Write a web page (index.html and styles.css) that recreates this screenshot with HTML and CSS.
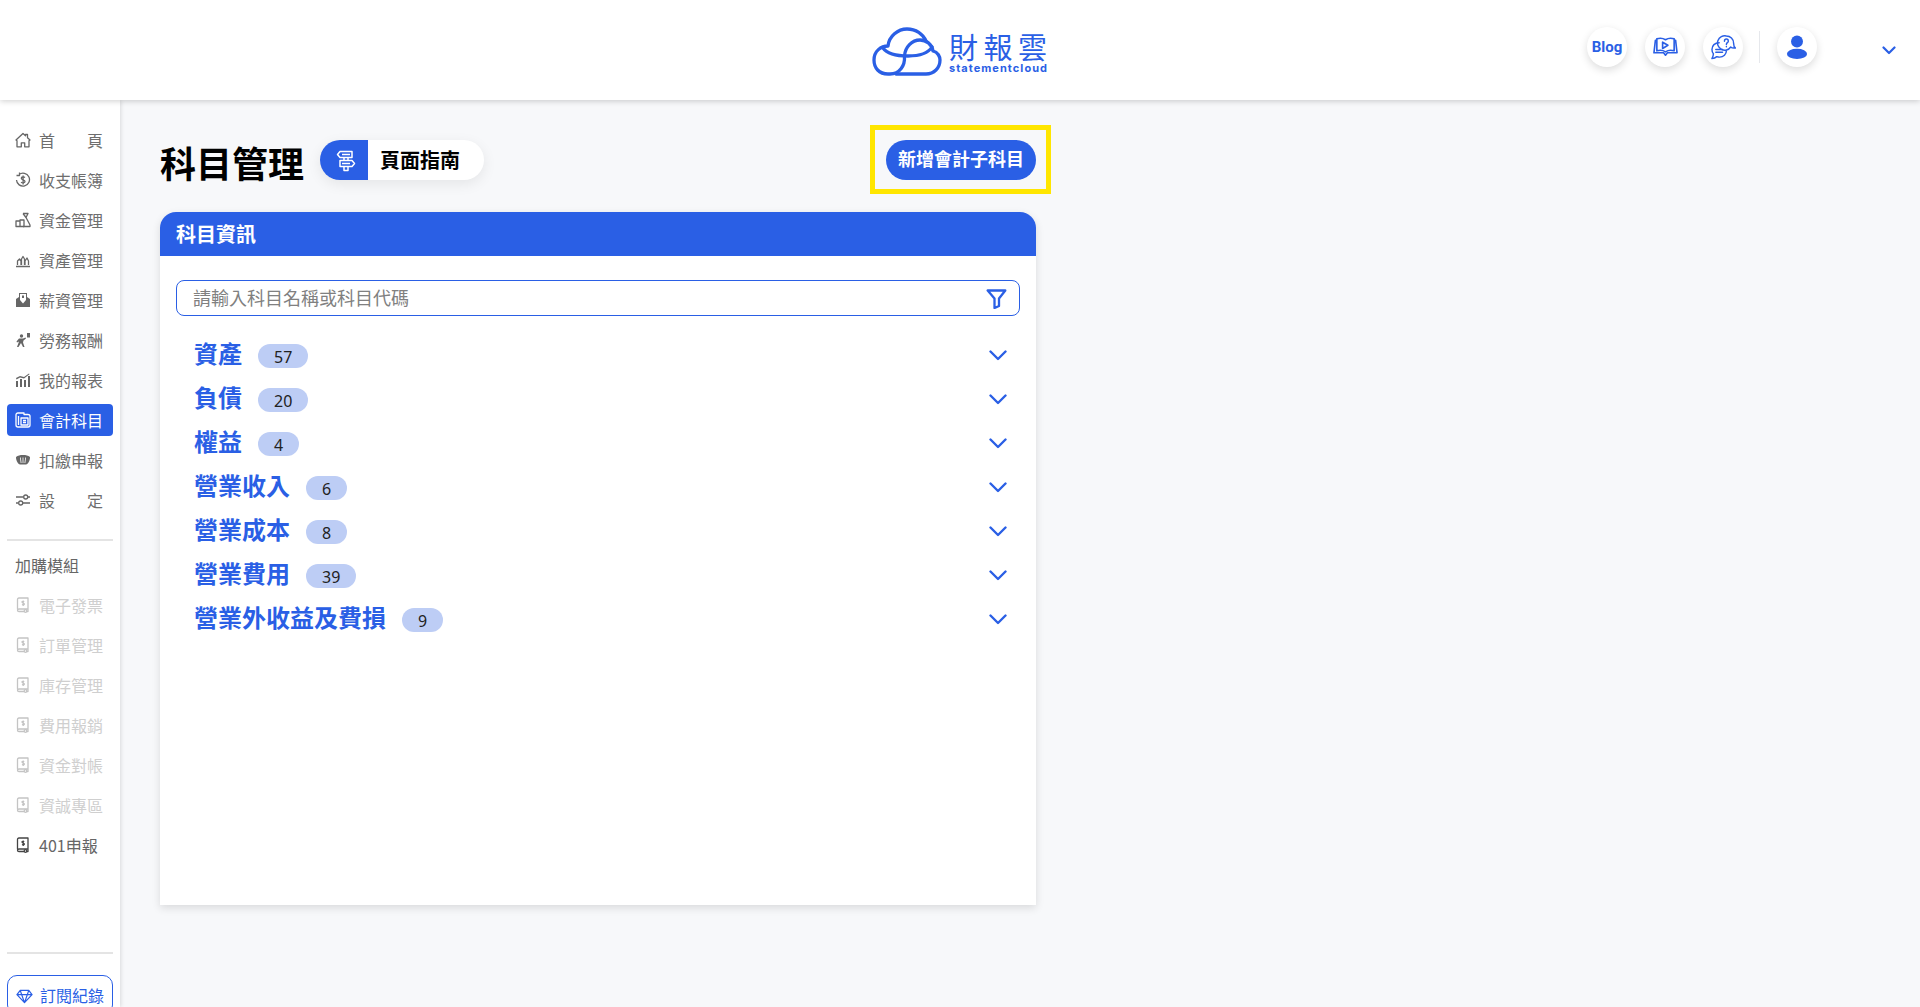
FILE: index.html
```html
<!DOCTYPE html>
<html lang="zh-Hant">
<head>
<meta charset="utf-8">
<title>財報雲 科目管理</title>
<link rel="stylesheet" href="styles.css">
</head>
<body>
<header class="topbar">
  <a class="logo">
    <svg class="logo-mark" viewBox="0 0 70 49" fill="none" stroke="#2a5fe5" stroke-width="3.300" stroke-linecap="round" stroke-linejoin="round">
      <path d="M32.500 30C33 38 28 47 18 47h-2C7 47 2 41 2 33c0-9 7-14 14-14C17 9 26 2 35 2c9 0 16 5 19 12"/>
      <path d="M32.500 29C33 20 40 13 48 13c6 0 12 4 13 11 5 1 7 6 7 9 0 8-6 14-14 14H24"/>
      <path d="M11 21c5 7 19 8 25 8s19-1 24-9"/>
    </svg>
    <span class="logo-text">
      <span class="logo-zh">財報雲</span>
      <span class="logo-en">statementcloud</span>
    </span>
  </a>
  <nav class="top-actions">
    <a class="round-btn blog">Blog</a>
    <a class="round-btn">
      <svg class="i-book" viewBox="0 0 26 20" fill="none" stroke="#2a5fe5" stroke-width="1.700" stroke-linejoin="round"><path d="M4 3H2.500L1 16h10l2 2.500 2-2.500h10L23.500 3H22"/><path d="M4 1.500c3-1 6-1 9 1 3-2 6-2 9-1V14c-3-1-6-1-9 1-3-2-6-2-9-1z"/><path d="M10 5v6.500l5.500-3.300z"/></svg>
    </a>
    <a class="round-btn">
      <svg class="i-help" viewBox="0 0 26 26" fill="none" stroke="#2a5fe5" stroke-width="1.500" stroke-linejoin="round" stroke-linecap="round"><path d="M16 1a7.500 7.500 0 0 1 7.500 7.500c0 2 .5 4 2 5-2.500.3-4 0-5-1A7.500 7.500 0 1 1 16 1z"/><path d="M14 6.500c0-3 4-3 4 0 0 1.500-2 1.500-2 3.300M16 12v.3"/><path d="M8.500 8C4 8 1 11 1 15c0 2 .7 3.500 1.500 4.500 0 2-.7 3.500-1.500 5 2 0 3.500-.5 5-2a8 8 0 0 0 3 .5c4 0 7-3 7-6.500"/><path d="M5 15h7M5 18h7"/></svg>
    </a>
    <span class="top-divider"></span>
    <a class="round-btn">
      <svg class="i-user" viewBox="0 0 24 26" fill="#2a5fe5"><circle cx="12" cy="7" r="6.500"/><ellipse cx="12" cy="20.500" rx="11" ry="5.500"/></svg>
    </a>
    <svg class="top-chevron" viewBox="0 0 14 9" fill="none" stroke="#2a5fe5" stroke-width="2.200" stroke-linecap="round" stroke-linejoin="round"><path d="M1.500 1.500 7 7l5.500-5.500"/></svg>
  </nav>
</header>

<div class="shell">
  <aside class="sidebar">
    <ul class="menu">
      <li class="menu-item">
        <svg class="mi" viewBox="0 0 16 16"><path d="M1 8 8 1.500l2.500 2.300V2.500h2v3.200L15 8l-1 .8v6H9.700v-4H6.300v4H2v-6z"/></svg>
        <span class="label spread"><span>首</span><span>頁</span></span>
      </li>
      <li class="menu-item">
        <svg class="mi" viewBox="0 0 16 16"><path d="M4 2.500A6.500 6.500 0 1 1 1.500 8M1.500 3.500h3v-3"/><path d="M10 5.500C9 4.700 6.300 4.700 6.300 6.300c0 2 3.700 1.200 3.700 3.300 0 1.600-2.700 1.600-4 .7M8.100 3.500v9"/></svg>
        <span class="label">收支帳簿</span>
      </li>
      <li class="menu-item">
        <svg class="mi" viewBox="0 0 16 16"><path d="M8 1.500h5L11 5.500l4 7.500v1.500H8"/><path d="M8 1.500l3 4M1 9h4v5.500H1zM5 8h4v6.500H5z"/></svg>
        <span class="label">資金管理</span>
      </li>
      <li class="menu-item">
        <svg class="mi" viewBox="0 0 16 16"><path d="M1 14.500h14M2.500 13V9l2-2 1.500 2v4M6.500 13V7l1.500-2.500L9.500 7v6M10 13V9l2-3 1.500 3v4"/></svg>
        <span class="label">資產管理</span>
      </li>
      <li class="menu-item">
        <svg class="mi solid" viewBox="0 0 16 16"><path d="M1 7l3-2V1h8V5l3 2v8H1z"/><path class="cut" d="M5 2h6V8L8 11.500 5 8z"/><path d="M7 3.500h2V6H7z"/></svg>
        <span class="label">薪資管理</span>
      </li>
      <li class="menu-item">
        <svg class="mi solid" viewBox="0 0 16 16"><circle cx="6.500" cy="4" r="1.700"/><path d="M4 6.500h4l2.500-1 .5 1L8.500 8.500 8 10.500 9.500 15H8L6 11l-2.500 4H2l2-5.500-2 1-.5-1z"/><path d="M12 1h3v4.500h-3z"/></svg>
        <span class="label">勞務報酬</span>
      </li>
      <li class="menu-item">
        <svg class="mi solid" viewBox="0 0 16 16"><path d="M1 9h2v6H1zM5 7h2v8H5zM9 8h2v7H9zM13 4h2v11h-2z"/><path d="M1 6l4-2 4 1 5-3.500.5.800L9 6.500l-4-1-3.500 2z"/></svg>
        <span class="label">我的報表</span>
      </li>
      <li class="menu-item active">
        <svg class="mi" viewBox="0 0 16 16"><path d="M9 2.500V1H3C1.500 1 1 2 1 3v10c0 1 .5 2 2 2h10c1 0 2-.5 2-2V4c0-1-1-1.500-2-1.500z"/><path d="M6 6h7v7H6zM8 8.500h3M8 10.500h3M3.500 4v9"/></svg>
        <span class="label">會計科目</span>
      </li>
      <li class="menu-item">
        <svg class="mi solid" viewBox="0 0 16 16"><path d="M1 5c2-1.500 4-2 7-2s5 .5 7 2c0 4-2 7-4 7.500H5C3 12 1 9 1 5z"/><path class="cut" d="M5 5.500h.8l.7 5.500h-.8zM7.600 5.500h.8V11h-.8zM10.200 5.500h.8L10.300 11h-.8z"/></svg>
        <span class="label">扣繳申報</span>
      </li>
      <li class="menu-item">
        <svg class="mi" viewBox="0 0 16 16"><path d="M1 5h7.500M13 5h2M1 11h2.500M8 11h7"/><circle cx="10.700" cy="5" r="2"/><circle cx="5.700" cy="11" r="2"/></svg>
        <span class="label spread"><span>設</span><span>定</span></span>
      </li>
    </ul>
    <hr class="side-rule">
    <div class="side-title">加購模組</div>
    <ul class="menu">
      <li class="menu-item off"><svg class="mi" viewBox="0 0 16 16"><use href="#book"/></svg><span class="label">電子發票</span></li>
      <li class="menu-item off"><svg class="mi" viewBox="0 0 16 16"><use href="#book"/></svg><span class="label">訂單管理</span></li>
      <li class="menu-item off"><svg class="mi" viewBox="0 0 16 16"><use href="#book"/></svg><span class="label">庫存管理</span></li>
      <li class="menu-item off"><svg class="mi" viewBox="0 0 16 16"><use href="#book"/></svg><span class="label">費用報銷</span></li>
      <li class="menu-item off"><svg class="mi" viewBox="0 0 16 16"><use href="#book"/></svg><span class="label">資金對帳</span></li>
      <li class="menu-item off"><svg class="mi" viewBox="0 0 16 16"><use href="#book"/></svg><span class="label">資誠專區</span></li>
      <li class="menu-item dark"><svg class="mi" viewBox="0 0 16 16"><use href="#book"/></svg><span class="label">401申報</span></li>
    </ul>
    <hr class="side-rule lower">
    <a class="sub-btn">
      <svg class="gem" viewBox="0 0 18 15" fill="none" stroke="#2a5fe5" stroke-width="1.300" stroke-linejoin="round"><path d="M4.500 1h9L17 5.500 9 14 1 5.500zM1 5.500h16M6 5.500 9 14l3-8.500M6 5.500 4.500 1M12 5.500 13.500 1"/></svg>
      <span>訂閱紀錄</span>
    </a>
  </aside>

  <main class="content">
    <div class="page-head">
      <div class="title-group">
        <h1>科目管理</h1>
        <a class="guide">
          <span class="guide-icon">
            <svg viewBox="0 0 20 22" fill="none" stroke="#fff" stroke-width="1.500" stroke-linejoin="round"><path d="M4 2h12v6H4L1.500 5zM16 11H4v6h12l2.500-3zM8 8v3M12 8v3M8 17v4h4v-4"/><path d="M6 5h8M6 14h8"/></svg>
          </span>
          <span class="guide-text">頁面指南</span>
        </a>
      </div>
      <button class="primary-btn">新增會計子科目</button>
    </div>

    <section class="card">
      <h2 class="card-head">科目資訊</h2>
      <div class="card-body">
        <div class="search">
          <span class="placeholder">請輸入科目名稱或科目代碼</span>
          <svg class="filter" viewBox="0 0 20 20" fill="none" stroke="#2a5fe5" stroke-width="2.300" stroke-linejoin="round"><path d="M1.200 1.500h17.600L12.500 9.500V17L8 19V9.500z"/></svg>
        </div>
        <ul class="groups">
          <li class="group"><span class="g-name">資產</span><span class="badge">57</span><svg class="g-chev" viewBox="0 0 18 11"><path d="M1.500 1.500 9 9l7.500-7.500"/></svg></li>
          <li class="group"><span class="g-name">負債</span><span class="badge">20</span><svg class="g-chev" viewBox="0 0 18 11"><path d="M1.500 1.500 9 9l7.500-7.500"/></svg></li>
          <li class="group"><span class="g-name">權益</span><span class="badge">4</span><svg class="g-chev" viewBox="0 0 18 11"><path d="M1.500 1.500 9 9l7.500-7.500"/></svg></li>
          <li class="group"><span class="g-name">營業收入</span><span class="badge">6</span><svg class="g-chev" viewBox="0 0 18 11"><path d="M1.500 1.500 9 9l7.500-7.500"/></svg></li>
          <li class="group"><span class="g-name">營業成本</span><span class="badge">8</span><svg class="g-chev" viewBox="0 0 18 11"><path d="M1.500 1.500 9 9l7.500-7.500"/></svg></li>
          <li class="group"><span class="g-name">營業費用</span><span class="badge">39</span><svg class="g-chev" viewBox="0 0 18 11"><path d="M1.500 1.500 9 9l7.500-7.500"/></svg></li>
          <li class="group"><span class="g-name">營業外收益及費損</span><span class="badge">9</span><svg class="g-chev" viewBox="0 0 18 11"><path d="M1.500 1.500 9 9l7.500-7.500"/></svg></li>
        </ul>
      </div>
    </section>
  </main>
</div>

<svg class="defs" width="0" height="0" aria-hidden="true">
  <symbol id="book" viewBox="0 0 16 16">
    <path d="M2.500 12V2.500c0-.8.500-1.500 1.500-1.500h9v11H4c-1 0-1.500.5-1.500 1.200 0 .8.500 1.300 1.500 1.300h5M13 12v2.500h-1"/>
    <path d="M9.300 4.500C8.600 4 7 4 7 5c0 1.300 2.400.7 2.400 2C9.400 8 7.800 8 7 7.500M8.200 3.500v5.500"/>
    <circle cx="10.500" cy="14" r="1.300"/>
  </symbol>
</svg>
</body>
</html>
```

FILE: styles.css
```css
* { box-sizing: border-box; }
html, body { margin: 0; height: 100%; }
body {
  height: 1007px;
  overflow: hidden;
  background: #f7f8fa;
  color: #000;
  font-family: "Noto Sans CJK TC", "Noto Sans", sans-serif;
}
ul { list-style: none; margin: 0; padding: 0; }
h1, h2 { margin: 0; }
.defs { position: absolute; }

/* top bar */
.topbar {
  position: relative;
  z-index: 2;
  height: 100px;
  background: #fff;
  box-shadow: 0 1px 6px rgba(0, 0, 0, .2);
  display: flex;
  align-items: center;
  justify-content: center;
}
.logo { display: flex; align-items: center; gap: 7px; margin-top: 2px; }
.logo-mark { width: 70px; height: 49px; }
.logo-text { display: flex; flex-direction: column; gap: 1px; padding-top: 3px; }
.logo-zh {
  font-size: 29px;
  line-height: 31px;
  letter-spacing: 5.500px;
  margin-right: -5.500px;
  color: #2a5fe5;
  font-weight: 400;
}
.logo-en {
  font-family: Inter, sans-serif;
  font-size: 11px;
  line-height: 11px;
  font-weight: 700;
  letter-spacing: 1.050px;
  color: #2a5fe5;
}
.top-actions {
  position: absolute;
  right: 24px;
  top: 27px;
  display: flex;
  align-items: center;
  gap: 18px;
}
.round-btn {
  width: 40px;
  height: 40px;
  border-radius: 50%;
  background: #fff;
  box-shadow: 0 3px 8px rgba(0, 0, 0, .14);
  display: flex;
  align-items: center;
  justify-content: center;
}
.blog {
  color: #2a5fe5;
  font-family: Roboto, sans-serif;
  font-weight: 700;
  font-size: 15px;
}
.i-book { width: 25px; height: 20px; }
.i-help { width: 25px; height: 25px; }
.i-user { width: 22px; height: 24px; }
.top-divider { width: 1px; height: 32px; margin: 0 -1px 0 -2px; background: #e6e8ec; }
.top-chevron { width: 14px; height: 9px; margin: 6px 0 0 47px; }

/* shell */
.shell { display: flex; height: 907px; }

/* sidebar */
.sidebar {
  width: 120px;
  flex: none;
  background: #fff;
  box-shadow: 1px 0 4px rgba(0, 0, 0, .12);
  padding: 24px 7px 0;
  display: flex;
  flex-direction: column;
  overflow: hidden;
}
.menu-item {
  height: 32px;
  flex: none;
  margin-bottom: 8px;
  border-radius: 4px;
  padding: 0 9px 0 8px;
  display: flex;
  align-items: center;
  gap: 8px;
  font-size: 16px;
  color: #6e6e6e;
}
.mi {
  width: 16px;
  height: 16px;
  flex: none;
  fill: none;
  stroke: #666;
  stroke-width: 1.300;
  stroke-linejoin: round;
}
.mi.solid { fill: #666; stroke: none; }
.mi.solid .cut { fill: #fff; }
.label { flex: 1; white-space: nowrap; line-height: 32px; }
.spread { display: flex; justify-content: space-between; padding-right: 1px; }
.active { background: #2a5fe5; color: #fff; }
.active .mi { stroke: #fff; }
.off { color: #cfcfcf; }
.off .mi { stroke: #c4c4c4; }
.dark { color: #666; }
.dark .mi { stroke: #444; }
.side-rule {
  width: 100%;
  flex: none;
  margin: 15px 0 8px;
  border: 0;
  border-top: 2px solid #e4e4e4;
}
.side-rule.lower { margin: 83px 0 21px; }
.side-title {
  height: 32px;
  flex: none;
  margin-bottom: 8px;
  padding-left: 8px;
  font-size: 16px;
  line-height: 32px;
  color: #666;
}
.sub-btn {
  height: 40px;
  flex: none;
  border: 1px solid #2a5fe5;
  border-radius: 10px;
  padding-left: 8px;
  display: flex;
  align-items: center;
  gap: 7px;
  font-size: 16px;
  color: #2a5fe5;
  white-space: nowrap;
}
.gem { width: 17px; height: 15px; flex: none; margin-top: 2px; }

/* main */
.content { width: 916px; padding: 40px 0 0 40px; }
.page-head {
  display: flex;
  align-items: center;
  justify-content: space-between;
  height: 40px;
  margin-bottom: 32px;
}
.title-group { display: flex; align-items: center; gap: 16px; }
h1 { font-size: 36px; line-height: 40px; font-weight: 700; margin-top: 4px; }
.guide {
  width: 164px;
  height: 40px;
  border-radius: 20px;
  background: #fff;
  box-shadow: 0 4px 14px rgba(0, 0, 0, .08);
  display: flex;
  align-items: center;
  overflow: hidden;
}
.guide-icon {
  width: 48px;
  height: 40px;
  background: #2a5fe5;
  display: flex;
  align-items: center;
  justify-content: center;
  padding-left: 3px;
}
.guide-icon svg { width: 20px; height: 23px; }
.guide-text { margin-left: 12px; font-size: 20px; line-height: 36px; font-weight: 700; margin-bottom: 1px; }
.primary-btn {
  position: relative;
  width: 150px;
  height: 40px;
  border: 0;
  border-radius: 20px;
  background: #2a5fe5;
  color: #fff;
  font: 700 18px/36px "Noto Sans CJK TC", sans-serif;
  padding: 0 0 5px;
}
.primary-btn::after {
  content: "";
  position: absolute;
  left: -16px;
  right: -15px;
  top: -15px;
  bottom: -14px;
  border: 5px solid #ffe600;
}

/* card */
.card {
  height: 693px;
  border-radius: 16px 16px 0 0;
  background: #fff;
  box-shadow: 0 3px 8px rgba(0, 0, 0, .12);
}
.card-head {
  height: 44px;
  padding-left: 16px;
  border-radius: 16px 16px 0 0;
  background: #2a5fe5;
  color: #fff;
  font-size: 20px;
  font-weight: 700;
  line-height: 43px;
}
.card-body { padding: 24px 16px; }
.search {
  height: 36px;
  border: 1px solid #2a5fe5;
  border-radius: 8px;
  padding: 0 12px 2px 16px;
  display: flex;
  align-items: center;
  justify-content: space-between;
}
.placeholder { font-size: 18px; color: #808080; }
.filter { width: 21px; height: 20px; margin-top: 4px; }
.groups { margin-top: 16px; padding: 0 13px 0 18px; }
.group {
  height: 44px;
  display: flex;
  align-items: center;
  color: #2a5fe5;
}
.g-name { font-size: 24px; font-weight: 700; line-height: 44px; margin-top: -3px; }
.badge {
  margin: 4px 0 0 16px;
  min-width: 41px;
  height: 24px;
  padding: 0 16px;
  border-radius: 12px;
  background: #bdcdf5;
  color: #222;
  font-family: "Noto Sans", sans-serif;
  font-size: 16px;
  line-height: 26px;
  text-align: center;
}
.g-chev {
  width: 18px;
  height: 11px;
  margin: 3px 0 0 auto;
  fill: none;
  stroke: #2a5fe5;
  stroke-width: 2.400;
  stroke-linecap: round;
  stroke-linejoin: round;
}
```
